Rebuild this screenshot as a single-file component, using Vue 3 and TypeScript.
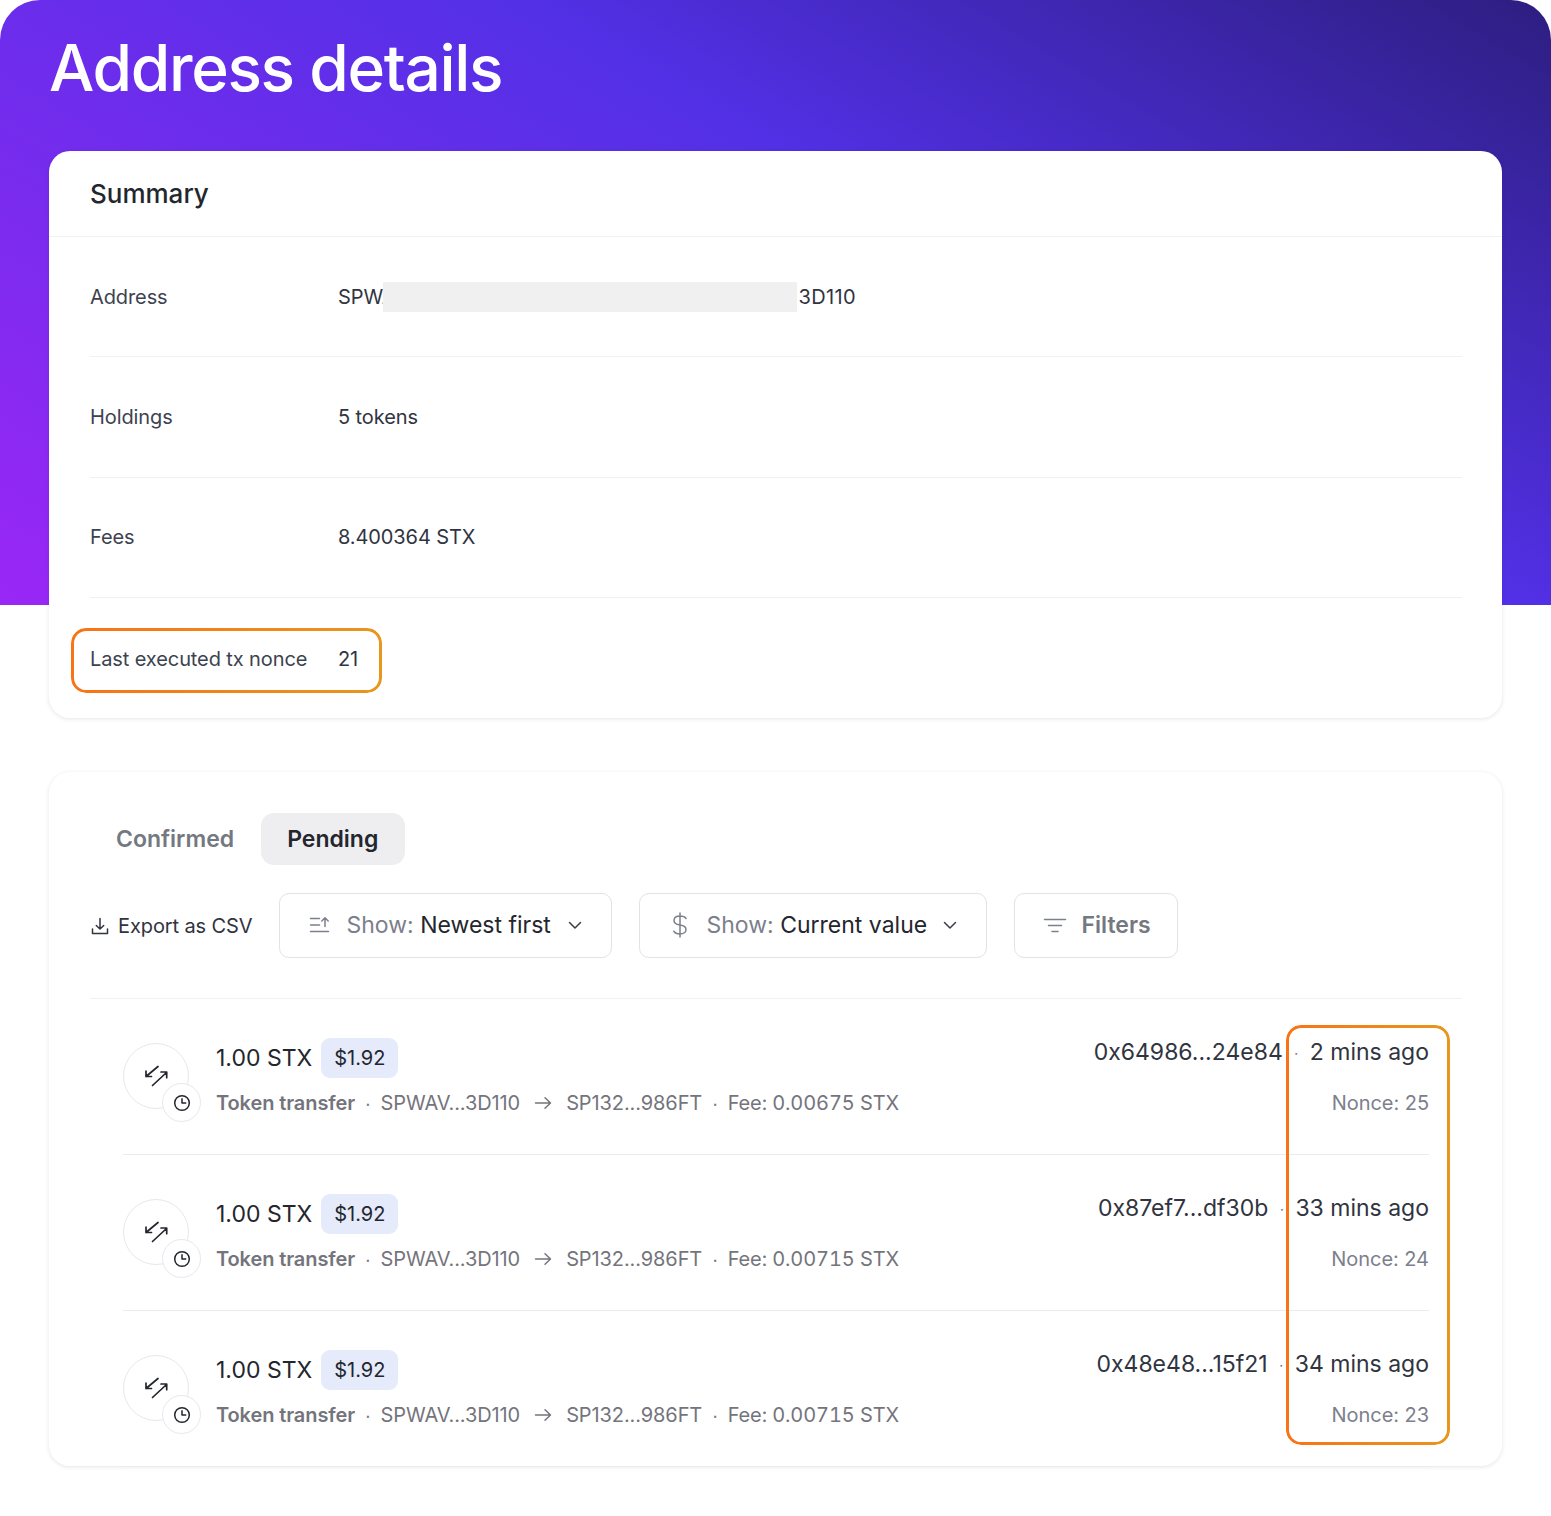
<script setup lang="ts">
interface Tx {
  hash: string
  time: string
  nonce: number
  fee: string
}

const summary: { label: string; value: string }[] = [
  { label: 'Holdings', value: '5 tokens' },
  { label: 'Fees', value: '8.400364 STX' },
]

const txs: Tx[] = [
  { hash: '0x64986...24e84', time: '2 mins ago', nonce: 25, fee: '0.00675' },
  { hash: '0x87ef7...df30b', time: '33 mins ago', nonce: 24, fee: '0.00715' },
  { hash: '0x48e48...15f21', time: '34 mins ago', nonce: 23, fee: '0.00715' },
]
</script>

<template>
  <div class="page">
    <header class="hero">
      <h1 class="title">Address details</h1>
    </header>

    <main class="content">
      <section class="card summary">
        <h2 class="summary-head">Summary</h2>
        <div class="summary-body">
          <div class="row">
            <span class="label">Address</span>
            <span class="value address">SPWA<i class="redact"></i><span class="address-end">3D110</span></span>
          </div>
          <div v-for="item in summary" :key="item.label" class="row">
            <span class="label">{{ item.label }}</span>
            <span class="value">{{ item.value }}</span>
          </div>
          <div class="row last">
            <span class="mark mark-nonce"></span>
            <span class="label">Last executed tx nonce</span>
            <span class="value">21</span>
          </div>
        </div>
      </section>

      <section class="card activity">
        <div class="tabs">
          <span class="tab">Confirmed</span>
          <span class="tab active">Pending</span>
        </div>

        <div class="controls">
          <span class="export">
            <svg width="20" height="20" viewBox="0 0 20 20" fill="none" stroke="#30343f" stroke-width="1.5" stroke-linecap="round" stroke-linejoin="round">
              <path d="M10 2.500v10.500M6.300 9.500 10 13l3.700-3.500M2.500 13v4.500h15V13" />
            </svg>
            Export as CSV
          </span>

          <div class="select sort">
            <svg width="24" height="24" viewBox="0 0 24 24" fill="none" stroke="#7c808c" stroke-width="1.500" stroke-linecap="round" stroke-linejoin="round">
              <path d="M2.500 5.500h9M2.500 12h9M2.500 18.500h18M17 13.500V5M13.800 8 17 4.800 20.200 8" />
            </svg>
            <span class="select-text"><span class="muted">Show:</span> Newest first</span>
            <svg class="sort-chev" width="16" height="16" viewBox="0 0 16 16" fill="none" stroke="#3a3d48" stroke-width="1.500" stroke-linecap="round" stroke-linejoin="round">
              <path d="m2.500 5.500 5.500 5.500 5.500-5.500" />
            </svg>
          </div>

          <div class="select value-select">
            <svg width="24" height="28" viewBox="0 0 24 28" fill="none" stroke="#7c808c" stroke-width="1.500" stroke-linecap="round" stroke-linejoin="round">
              <path d="M12 2v24M18 7.500C17 5.800 15 5 12 5 8.500 5 6 6.700 6 9.500S8.500 13.500 12 14s6 1.800 6 4.500-2.500 4.500-6 4.500c-3 0-5.200-.9-6.200-2.800" />
            </svg>
            <span class="select-text"><span class="muted">Show:</span> Current value</span>
            <svg width="16" height="16" viewBox="0 0 16 16" fill="none" stroke="#3a3d48" stroke-width="1.500" stroke-linecap="round" stroke-linejoin="round">
              <path d="m2.500 5.500 5.500 5.500 5.500-5.500" />
            </svg>
          </div>

          <div class="select filters">
            <svg width="24" height="24" viewBox="0 0 24 24" fill="none" stroke="#7c808c" stroke-width="1.500" stroke-linecap="round">
              <path d="M1.500 6.500h21M5.500 12.500h13M9 18.500h6" />
            </svg>
            <span class="filters-text">Filters</span>
          </div>
        </div>

        <div class="list">
          <span class="mark mark-time"></span>
          <article v-for="tx in txs" :key="tx.hash" class="tx">
            <div class="avatar">
              <svg width="30" height="30" viewBox="0 0 30 30" fill="none" stroke="#24262e" stroke-width="1.700" stroke-linecap="round" stroke-linejoin="round">
                <path d="M17 5.500 5 15.500M5 10.200v5.300h5.500M11.500 24.500 25.500 11.500M20 11h5.700v5.700" />
              </svg>
              <span class="clock">
                <svg width="20" height="20" viewBox="0 0 20 20" fill="none" stroke="#24262e" stroke-width="1.500" stroke-linecap="round" stroke-linejoin="round">
                  <circle cx="10" cy="10" r="7.300" />
                  <path d="M10 5.800V10h3.700" />
                </svg>
              </span>
            </div>

            <div class="tx-main">
              <div class="tx-amount">
                <span>1.00 STX</span>
                <span class="badge">$1.92</span>
              </div>
              <div class="tx-meta">
                <strong>Token transfer</strong>
                <span class="dot">∙</span>
                <span>SPWAV...3D110</span>
                <svg width="20" height="20" viewBox="0 0 20 20" fill="none" stroke="#74747c" stroke-width="1.500" stroke-linecap="round" stroke-linejoin="round">
                  <path d="M2.500 10h15M12 4.800 17.500 10 12 15.200" />
                </svg>
                <span>SP132...986FT</span>
                <span class="dot">∙</span>
                <span class="fee">Fee: {{ tx.fee }} STX</span>
              </div>
            </div>

            <div class="tx-side">
              <div class="tx-hash">
                <span>{{ tx.hash }}</span>
                <span class="hash-dot">∙</span>
                <span>{{ tx.time }}</span>
              </div>
              <div class="tx-nonce">Nonce: {{ tx.nonce }}</div>
            </div>
          </article>
        </div>
      </section>
    </main>
  </div>
</template>

<style>
html,
body {
  margin: 0;
  background: #fff;
}
</style>

<style scoped>
.page {
  width: 1551px;
  height: 1516px;
  overflow: hidden;
  font-family: Inter, "Liberation Sans", sans-serif;
  color: #24262e;
  background: #fff;
}

.hero {
  box-sizing: border-box;
  height: 605px;
  padding: 29px 49px 0;
  border-radius: 40px 40px 0 0;
  background: linear-gradient(31deg, #9a27f5 0%, #5230e6 60%, #2d1e80 100%);
}

.title {
  margin: 0;
  font-size: 64px;
  line-height: 78px;
  font-weight: 450;
  letter-spacing: -1.35px;
  color: #fff;
}

.content {
  display: flex;
  flex-direction: column;
  gap: 54px;
  margin-top: -454px;
  padding: 0 49px;
}

.card {
  box-sizing: border-box;
  background: #fff;
  border-radius: 21px;
  box-shadow: 0 1px 4px rgba(40, 40, 80, 0.12);
}

.summary {
  height: 567px;
}

.summary-head {
  box-sizing: border-box;
  height: 86px;
  margin: 0;
  padding: 0 41px;
  display: flex;
  align-items: center;
  font-size: 26px;
  font-weight: 500;
  border-bottom: 1px solid #f1f1f3;
}

.summary-body {
  padding: 0 40px 0 41px;
}

.row {
  position: relative;
  box-sizing: border-box;
  height: 120.4px;
  display: flex;
  align-items: center;
  border-bottom: 1px solid #f1f1f3;
  font-size: 20px;
  letter-spacing: -0.1px;
}

.row.last {
  height: 122px;
  border-bottom: 0;
}

.label {
  width: 248px;
  flex: none;
  color: #3d4250;
}

.value {
  color: #30343f;
}

.address {
  display: flex;
  align-items: center;
}

.address-end {
  letter-spacing: 0.35px;
}

.redact {
  display: block;
  width: 414px;
  height: 30px;
  margin: 0 2px 0 -13px;
  background: #f0f0f0;
}

.activity {
  height: 694px;
  padding: 41px 40px 0 41px;
}

.tabs {
  display: flex;
  align-items: center;
  height: 52px;
  gap: 1px;
}

.tab {
  display: flex;
  align-items: center;
  height: 52px;
  padding: 0 26px;
  border-radius: 13px;
  font-size: 23px;
  font-weight: 600;
  color: #747880;
}

.tab.active {
  padding-right: 27px;
  background: #eeeef1;
  color: #24262e;
}

.controls {
  display: flex;
  align-items: center;
  gap: 27px;
  height: 65px;
  margin-top: 28px;
  padding-bottom: 40px;
  border-bottom: 1px solid #f1f1f3;
}

.export {
  display: flex;
  align-items: center;
  gap: 8px;
  width: 162px;
  flex: none;
  font-size: 20px;
  letter-spacing: -0.1px;
  color: #30343f;
  white-space: nowrap;
}

.export svg {
  flex: none;
}

.select {
  box-sizing: border-box;
  height: 65px;
  display: flex;
  align-items: center;
  flex: none;
  gap: 14.500px;
  padding: 0 28px 2px;
  border: 1.500px solid #e2e2e8;
  border-radius: 10px;
  font-size: 23px;
  color: #24262e;
  white-space: nowrap;
}

.select svg {
  flex: none;
}

.select .sort-chev {
  margin-left: 2px;
}

.sort {
  width: 333px;
}

.value-select {
  width: 348px;
}

.filters {
  width: 164px;
}

.muted {
  color: #7c808c;
}

.filters-text {
  font-weight: 600;
  color: #747880;
}

.list {
  position: relative;
  padding: 0 33px;
}

.tx {
  box-sizing: border-box;
  height: 156px;
  display: flex;
  align-items: flex-start;
  padding-top: 39px;
  border-bottom: 1px solid #ebebee;
}

.avatar {
  position: relative;
  flex: none;
  box-sizing: border-box;
  width: 66px;
  height: 66px;
  margin: 5px 27px 0 0;
  display: flex;
  align-items: center;
  justify-content: center;
  border: 1px solid #e8e8ec;
  border-radius: 50%;
}

.clock {
  position: absolute;
  right: -13px;
  bottom: -14px;
  box-sizing: border-box;
  width: 39px;
  height: 39px;
  display: flex;
  align-items: center;
  justify-content: center;
  background: #fff;
  border: 1px solid #e8e8ec;
  border-radius: 50%;
}

.tx-main {
  flex: 1;
  min-width: 0;
}

.tx-amount {
  display: flex;
  align-items: center;
  gap: 9px;
  height: 40px;
  font-size: 23px;
}

.badge {
  box-sizing: border-box;
  height: 40px;
  padding: 0 13px;
  display: flex;
  align-items: center;
  border-radius: 9px;
  background: #e5ebfa;
  font-size: 20px;
}

.tx-meta {
  display: flex;
  align-items: center;
  height: 30px;
  margin-top: 10px;
  font-size: 20px;
  letter-spacing: -0.1px;
  color: #74747c;
  white-space: nowrap;
}

.tx-meta strong {
  font-weight: 600;
}

.tx-meta svg {
  margin: 0 13px;
}

.fee {
  font-variant-numeric: tabular-nums;
}

.dot {
  margin: 0 10px;
}

.tx-side {
  flex: none;
  display: flex;
  flex-direction: column;
  align-items: flex-end;
}

.tx-hash {
  display: flex;
  align-items: center;
  height: 30px;
  margin-top: -1px;
  font-size: 23px;
  color: #30343f;
  white-space: nowrap;
}

.hash-dot {
  width: 27px;
  text-align: center;
  color: #74747c;
  font-size: 16px;
}

.tx-nonce {
  height: 30px;
  line-height: 30px;
  margin-top: 21px;
  font-size: 20px;
  letter-spacing: -0.05px;
  color: #7c808c;
}

.mark {
  position: absolute;
  box-sizing: border-box;
  pointer-events: none;
}

.mark::before {
  content: "";
  position: absolute;
  inset: 0;
  border-radius: inherit;
  padding: 2.700px;
  background: linear-gradient(90deg, #f97316, #e8961c);
  -webkit-mask: linear-gradient(#000 0 0) content-box, linear-gradient(#000 0 0);
  -webkit-mask-composite: xor;
  mask-composite: exclude;
}

.mark-nonce {
  left: -19px;
  top: 30px;
  width: 311px;
  height: 65px;
  border-radius: 15px;
}

.mark-time {
  right: 12px;
  top: 26px;
  width: 164px;
  height: 420px;
  border-radius: 15px;
}
</style>
